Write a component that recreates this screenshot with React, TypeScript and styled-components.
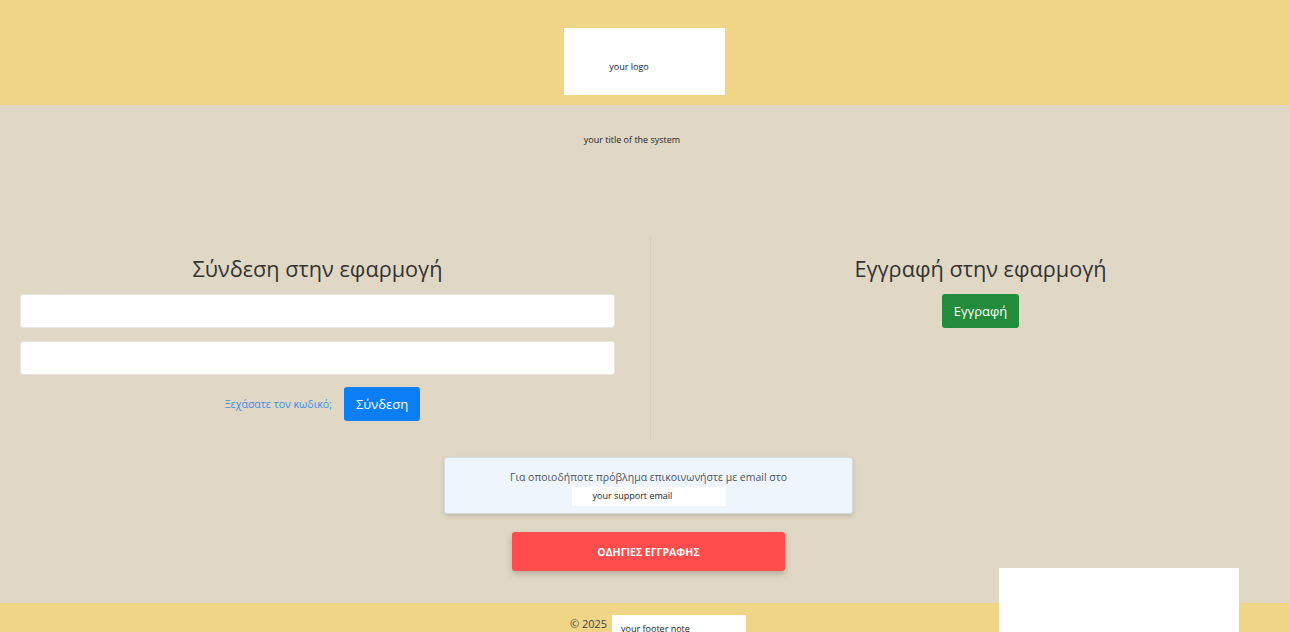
import React from "react";
import styled, { createGlobalStyle } from "styled-components";

const GlobalStyle = createGlobalStyle`
  * { box-sizing: border-box; }
  body {
    margin: 0;
    font-family: "Open Sans", "Noto Sans", "DejaVu Sans", sans-serif;
    background: #e0d8c4;
    color: #333;
  }
`;

const Header = styled.header`
  height: 105px;
  background: #f0d587;
  display: flex;
  justify-content: center;
  padding-top: 28px;
  padding-right: 2px;
`;

const LogoBox = styled.div`
  width: 161px;
  height: 67px;
  background: #fff;
  display: flex;
  align-items: center;
  justify-content: center;
  font-size: 9px;
  color: #222;
  padding: 10px 30px 0 0;
`;

const Main = styled.main`
  background: #e0d8c4;
  padding-bottom: 32px;
`;

const SystemTitle = styled.div`
  text-align: center;
  font-size: 9px;
  color: #222;
  padding: 28px 26px 0 0;
  height: 132px;
`;

const Columns = styled.div`
  display: grid;
  grid-template-columns: 650px 1fr;
`;

const Column = styled.section<{ $right?: boolean }>`
  display: flex;
  flex-direction: column;
  align-items: center;
  padding: 16px ${(p) => (p.$right ? "15px" : "35px")} 19px
    ${(p) => (p.$right ? "35px" : "20px")};
  border-left: ${(p) => (p.$right ? "1px solid #d8cfb9" : "none")};
`;

const Heading = styled.h2`
  margin: 0 0 9px;
  font-size: 21.7px;
  font-weight: 400;
  line-height: 32px;
  color: #333;
`;

const Input = styled.input`
  width: 100%;
  height: 34px;
  border: 1px solid #e6e6e6;
  border-radius: 3px;
  background: #fff;
  margin-bottom: 13px;
  outline: none;
`;

const Actions = styled.div`
  display: flex;
  align-items: center;
  gap: 12px;
  margin-top: -1px;
  padding-left: 10px;
`;

const ForgotLink = styled.a`
  color: #3b8ee6;
  font-size: 10.6px;
  text-decoration: none;
`;

const Button = styled.button<{ $bg: string }>`
  background: ${(p) => p.$bg};
  color: #fff;
  border: none;
  border-radius: 3px;
  height: 34px;
  padding: 0 12px;
  font-family: inherit;
  font-size: 13px;
`;

const Bottom = styled.div`
  padding-left: 7px;
`;

const SupportBox = styled.div`
  width: 409px;
  height: 57px;
  margin: 17px auto 0;
  background: #eef5fd;
  border: 1px solid #d4dbe3;
  border-radius: 3px;
  box-shadow: 0 2px 4px rgba(0, 0, 0, 0.15);
  padding-top: 12px;
  display: flex;
  flex-direction: column;
  align-items: center;
  font-size: 10.5px;
  color: #4f5660;
`;

const EmailBox = styled.div`
  width: 154px;
  height: 19px;
  margin-top: 3px;
  background: #fff;
  font-size: 9px;
  color: #222;
  padding: 2px 0 0 21px;
`;

const GuideButton = styled.button`
  display: block;
  width: 273px;
  height: 39px;
  margin: 18px auto 0;
  background: #ff4c4c;
  color: #fff;
  border: none;
  border-radius: 3px;
  box-shadow: 0 3px 6px rgba(0, 0, 0, 0.2);
  font-family: inherit;
  font-weight: 700;
  font-size: 10.5px;
`;

const Footer = styled.footer`
  background: #f0d587;
  height: 60px;
  display: flex;
  justify-content: center;
  align-items: flex-start;
  padding-top: 12px;
  gap: 5px;
  font-size: 11px;
  color: #444;
`;

const Copy = styled.span`
  padding-top: 1px;
  padding-left: 26px;
`;

const FooterNote = styled.div`
  width: 134px;
  height: 30px;
  background: #fff;
  font-size: 9px;
  color: #222;
  padding: 7px 0 0 9px;
`;

const Widget = styled.div`
  position: fixed;
  left: 999px;
  top: 568px;
  width: 240px;
  height: 100px;
  background: #fff;
`;

export default function App() {
  return (
    <>
      <GlobalStyle />
      <Header>
        <LogoBox>your logo</LogoBox>
      </Header>
      <Main>
        <SystemTitle>your title of the system</SystemTitle>
        <Columns>
          <Column>
            <Heading>Σύνδεση στην εφαρμογή</Heading>
            <Input type="text" />
            <Input type="password" />
            <Actions>
              <ForgotLink href="#">Ξεχάσατε τον κωδικό;</ForgotLink>
              <Button $bg="#0a7ff5">Σύνδεση</Button>
            </Actions>
          </Column>
          <Column $right>
            <Heading>Εγγραφή στην εφαρμογή</Heading>
            <Button $bg="#238c3c">Εγγραφή</Button>
          </Column>
        </Columns>
        <Bottom>
          <SupportBox>
            Για οποιοδήποτε πρόβλημα επικοινωνήστε με email στο
            <EmailBox>your support email</EmailBox>
          </SupportBox>
          <GuideButton>ΟΔΗΓΙΕΣ ΕΓΓΡΑΦΗΣ</GuideButton>
        </Bottom>
      </Main>
      <Footer>
        <Copy>© 2025</Copy>
        <FooterNote>your footer note</FooterNote>
      </Footer>
      <Widget />
    </>
  );
}
